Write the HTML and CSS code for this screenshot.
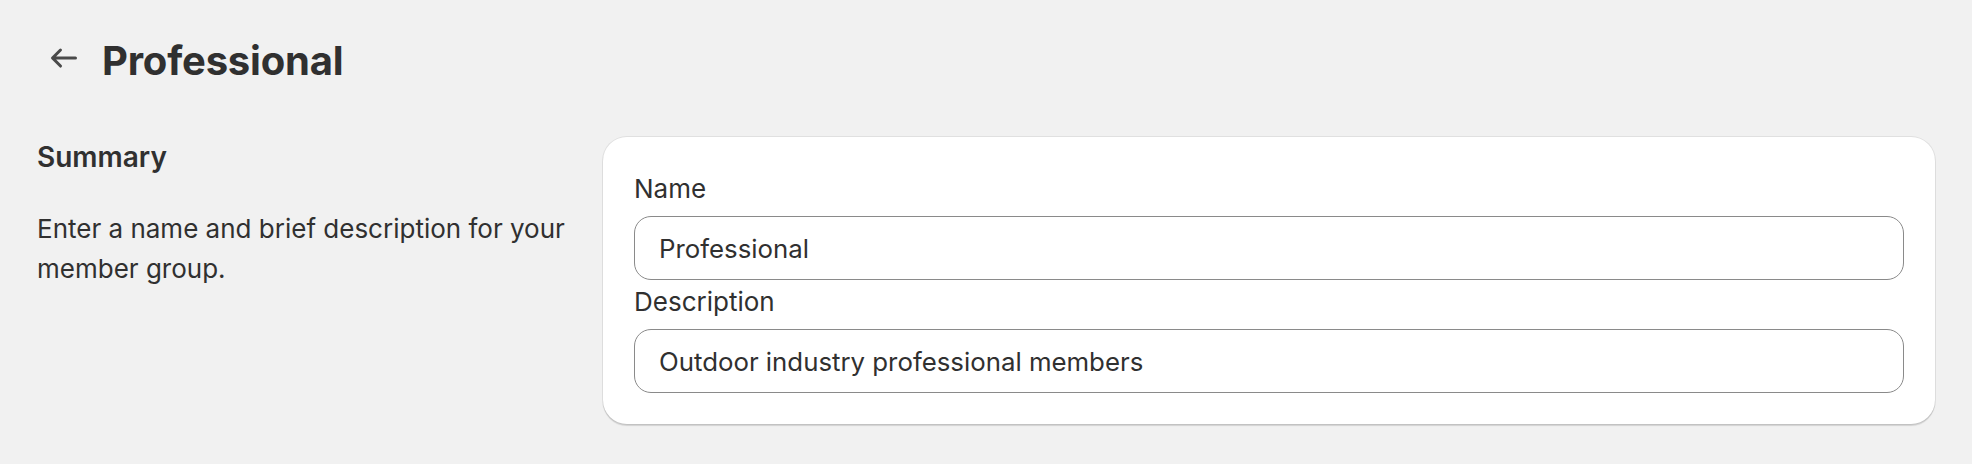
FILE: index.html
```html
<!DOCTYPE html>
<html lang="en">
<head>
<meta charset="utf-8">
<title>Professional</title>
<link rel="stylesheet" href="styles.css">
</head>
<body>
<div class="page">
  <header class="header">
    <button class="back" type="button" aria-label="Back">
      <svg viewBox="0 0 20 20" width="40" height="40" aria-hidden="true"><path fill="#4a4a4a" d="M16.5 10a.75.75 0 0 1-.75.75h-9.69l2.72 2.72a.75.75 0 1 1-1.06 1.06l-4-4a.75.75 0 0 1 0-1.06l4-4a.75.75 0 0 1 1.06 1.06l-2.72 2.72h9.69a.75.75 0 0 1 .75.75Z"/></svg>
    </button>
    <h1 class="title">Professional</h1>
  </header>
  <section class="layout">
    <div class="aside">
      <h2 class="aside-title">Summary</h2>
      <p class="aside-text">Enter a name and brief description for your member group.</p>
    </div>
    <div class="card">
      <label class="field">
        <span class="label">Name</span>
        <span class="input">Professional</span>
      </label>
      <label class="field">
        <span class="label">Description</span>
        <span class="input">Outdoor industry professional members</span>
      </label>
    </div>
  </section>
</div>
</body>
</html>
```
FILE: styles.css
```css
* { box-sizing: border-box; }
html, body { margin: 0; padding: 0; }
body {
  background: #f1f1f1;
  color: #303030;
  font-family: Inter, "Noto Sans", sans-serif;
  width: 1972px;
  height: 464px;
  overflow: hidden;
}
.page {
  padding: 0 37px 0 37px;
}
.header {
  display: flex;
  align-items: center;
  height: 40px;
  margin-top: 38px;
  padding-left: 7px;
  gap: 18px;
}
.back {
  display: flex;
  width: 40px;
  height: 40px;
  padding: 0;
  border: 0;
  background: none;
}
.title {
  margin: 0;
  font-size: 40px;
  line-height: 40px;
  font-weight: 700;
  letter-spacing: -0.2px;
  position: relative;
  top: 3px;
}
.layout {
  display: grid;
  grid-template-columns: 566px 1fr;
  margin-top: 59px;
}
.aside {
  padding-top: 4px;
}
.aside-title {
  margin: 0;
  font-size: 28px;
  line-height: 32px;
  font-weight: 600;
}
.aside-text {
  margin: 36px 0 0;
  max-width: 545px;
  font-size: 26px;
  line-height: 40px;
}
.card {
  background: #fff;
  border-radius: 24px;
  padding: 36px 31px 31px;
  box-shadow: 0 0 0 1px rgba(0,0,0,0.07), 0 2px 1px rgba(0,0,0,0.13);
  display: flex;
  flex-direction: column;
  gap: 6px;
}
.field {
  display: flex;
  flex-direction: column;
  gap: 11px;
}
.label {
  font-size: 26px;
  line-height: 32px;
}
.input {
  display: flex;
  align-items: center;
  height: 64px;
  padding: 0 24px;
  border: 1px solid #8a8a8a;
  border-radius: 17px;
  font-size: 25.8px;
}
```
